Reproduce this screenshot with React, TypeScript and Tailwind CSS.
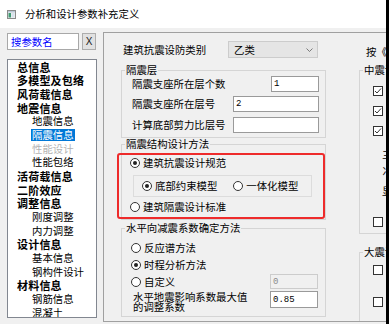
import React from "react";

function Radio({ checked }: { checked?: boolean }) {
  return (
    <span className="w-[10px] h-[10px] rounded-full border border-[#333333] bg-white flex items-center justify-center shrink-0">
      {checked && <span className="w-[4px] h-[4px] rounded-full bg-[#222222]" />}
    </span>
  );
}

function Check({ checked }: { checked?: boolean }) {
  return (
    <span className="w-[10px] h-[10px] border border-[#333333] bg-white flex items-center justify-center shrink-0">
      {checked && (
        <svg width="8" height="8" viewBox="0 0 8 8">
          <polyline points="1,4 3,6 7,1.5" fill="none" stroke="#333333" strokeWidth="1" />
        </svg>
      )}
    </span>
  );
}

function Group({ label, className, children }: { label: string; className?: string; children?: React.ReactNode }) {
  return (
    <fieldset className={"border border-[#d5d5d5] min-w-0 " + (className ?? "")}>
      <legend className="ml-[3px] px-[1px] text-[10.4px] leading-[12px] whitespace-nowrap">{label}</legend>
      {children}
    </fieldset>
  );
}

function Input({ className, value, disabled }: { className: string; value?: string; disabled?: boolean }) {
  return (
    <div
      className={
        "border flex items-center pl-[2px] font-['Liberation_Mono',monospace] text-[9px] leading-[10px] shrink-0 " +
        (disabled ? "border-[#cccccc] bg-[#f0f0f0] text-[#8a8a8a] " : "border-[#9a9a9a] bg-white text-black ") +
        className
      }
    >
      {value}
    </div>
  );
}

type Item = { t: string; b?: boolean; sel?: boolean; dis?: boolean };
const tree: Item[] = [
  { t: "总信息", b: true },
  { t: "多模型及包络", b: true },
  { t: "风荷载信息", b: true },
  { t: "地震信息", b: true },
  { t: "地震信息" },
  { t: "隔震信息", sel: true },
  { t: "性能设计", dis: true },
  { t: "性能包络" },
  { t: "活荷载信息", b: true },
  { t: "二阶效应", b: true },
  { t: "调整信息", b: true },
  { t: "刚度调整" },
  { t: "内力调整" },
  { t: "设计信息", b: true },
  { t: "基本信息" },
  { t: "钢构件设计" },
  { t: "材料信息", b: true },
  { t: "钢筋信息" },
  { t: "混凝土" },
];

function TitleIcon() {
  return (
    <svg width="9" height="9" viewBox="0 0 9 9" className="shrink-0">
      <rect x="0.5" y="0.5" width="8" height="8" fill="#f2f2f2" stroke="#8a8a8a" />
      <rect x="1" y="1" width="7" height="1.5" fill="#b9c7d6" />
      <rect x="1.5" y="3" width="2.5" height="4.5" fill="#3f9a72" />
      <rect x="4.5" y="3" width="3" height="4.5" fill="#d8e2ec" />
    </svg>
  );
}

export default function App() {
  return (
    <div className="w-[389px] h-[324px] overflow-hidden bg-[#f0f0f0] flex font-['Noto_Sans_CJK_SC',sans-serif] text-black">
      <div className="w-[386px] h-full flex flex-col overflow-hidden shrink-0">
        {/* title bar */}
        <div className="h-[28px] bg-white flex items-center pl-[7px] shrink-0">
          <TitleIcon />
          <span className="ml-[9px] text-[10.4px] leading-[12px] whitespace-nowrap">分析和设计参数补充定义</span>
        </div>

        <div className="flex flex-1 pt-[4px] min-h-0">
          {/* left column */}
          <div className="w-[103px] shrink-0 pl-[7px] pt-[1px] flex flex-col">
            <div className="flex h-[17px]">
              <div className="w-[72px] h-[17px] bg-white border border-[#a8a8a8] flex items-center pl-[3px] text-[10.4px] leading-[12px] text-[#0000ff]">
                搜参数名
              </div>
              <div className="ml-[3px] w-[14px] h-[17px] bg-[#e1e1e1] border border-[#adadad] flex items-center justify-center font-['Liberation_Sans',sans-serif] text-[10px] leading-[12px] text-[#222222]">
                X
              </div>
            </div>
            <div className="mt-[9px] w-[90px] h-[259px] bg-white border border-[#828790] flex flex-col overflow-hidden">
              {tree.map((it, i) => (
                <div
                  key={i}
                  className={
                    "h-[13.67px] flex items-center shrink-0 whitespace-nowrap leading-[12px] " +
                    (it.b ? "pl-[8px]" : "pl-[23px]")
                  }
                >
                  <span
                    className={
                      "h-[12px] leading-[12px] flex items-center px-[1px] " +
                      (it.b
                        ? "font-bold text-[11px] tracking-[0.2px] "
                        : "text-[10.4px] ") +
                      (it.sel ? "bg-[#0078d7] text-white " : "") +
                      (it.dis ? "text-[#b4b4b4] " : "")
                    }
                  >
                    {it.t}
                  </span>
                </div>
              ))}
            </div>
          </div>

          {/* right panel */}
          <div className="w-[283px] h-[290px] shrink-0 border-t border-l border-b border-[#a0a0a0] flex overflow-hidden text-[10.4px] leading-[12px]">
            {/* main column */}
            <div className="w-[222px] shrink-0 pl-[17px] flex flex-col">
              <div className="mt-[8px] h-[17px] flex items-center">
                <span className="ml-[2px] w-[105px] whitespace-nowrap">建筑抗震设防类别</span>
                <div className="w-[90px] h-[17px] bg-[#e5e5e5] border border-[#cccccc] flex items-center pl-[5px] pr-[4px] justify-between">
                  <span>乙类</span>
                  <svg width="7" height="4" viewBox="0 0 7 4">
                    <polyline points="0.5,0.5 3.5,3.5 6.5,0.5" fill="none" stroke="#606060" strokeWidth="0.8" />
                  </svg>
                </div>
              </div>

              <Group label="隔震层" className="mt-[6px] pb-[4px]">
                <div className="flex flex-col pl-[10px] pr-[6px]">
                  <div className="h-[16px] flex items-center justify-between">
                    <span className="whitespace-nowrap">隔震支座所在层个数</span>
                    <Input className="w-[48px] h-[16px]" value="1" />
                  </div>
                  <div className="mt-[4px] h-[16px] flex items-center justify-between">
                    <span className="whitespace-nowrap">隔震支座所在层号</span>
                    <Input className="w-[86px] h-[16px]" value="2" />
                  </div>
                  <div className="mt-[5px] h-[16px] flex items-center justify-between">
                    <span className="whitespace-nowrap">计算底部剪力比层号</span>
                    <Input className="w-[86px] h-[16px]" value="" />
                  </div>
                </div>
              </Group>

              <Group label="隔震结构设计方法" className="pb-0">
                <div className="mt-[3px] -ml-[5px] w-[208px] h-[66px] border-2 border-[#ee2b2b] rounded-[3px] flex flex-col">
                  <div className="h-[16px] flex items-center pl-[11px] gap-[3px]">
                    <Radio checked />
                    <span className="whitespace-nowrap">建筑抗震设计规范</span>
                  </div>
                  <div className="mt-[4px] ml-[14px] w-[179px] h-[22px] border border-[#dcdcdc] flex items-center pl-[8px]">
                    <Radio checked />
                    <span className="ml-[3px] whitespace-nowrap">底部约束模型</span>
                    <span className="ml-[16px]"><Radio /></span>
                    <span className="ml-[3px] whitespace-nowrap">一体化模型</span>
                  </div>
                  <div className="mt-[2px] h-[16px] flex items-center pl-[11px] gap-[3px]">
                    <Radio />
                    <span className="whitespace-nowrap">建筑隔震设计标准</span>
                  </div>
                </div>
              </Group>

              <Group label="水平向减震系数确定方法" className="mt-[2px] pb-[4px]">
                <div className="flex flex-col pt-[5px] pr-[7px]">
                  <div className="h-[17px] flex items-center pl-[9px] gap-[3px]">
                    <Radio />
                    <span className="whitespace-nowrap">反应谱方法</span>
                  </div>
                  <div className="h-[17px] flex items-center pl-[9px] gap-[3px]">
                    <Radio checked />
                    <span className="whitespace-nowrap">时程分析方法</span>
                  </div>
                  <div className="h-[17px] flex items-center pl-[9px]">
                    <Radio />
                    <span className="ml-[3px] whitespace-nowrap">自定义</span>
                    <Input className="ml-auto w-[48px] h-[15px]" value="0" disabled />
                  </div>
                  <div className="mt-[1px] h-[21px] flex items-start pl-[11px]">
                    <div className="flex flex-col leading-[10px] mt-[1px] whitespace-nowrap">
                      <span>水平地震影响系数最大值</span>
                      <span>的调整系数</span>
                    </div>
                    <Input className="ml-auto w-[48px] h-[17px]" value="0.85" />
                  </div>
                </div>
              </Group>
            </div>

            {/* right column (clipped) */}
            <div className="ml-[33px] w-[120px] shrink-0 flex flex-col">
              <div className="mt-[13px] h-[14px] flex items-center pl-[7px] whitespace-nowrap">按《建筑隔震设计标准》</div>
              <Group label="中震设计" className="mt-[6px] pb-[3px]">
                <div className="flex flex-col pt-[5px] pl-[13px]">
                  <div className="h-[20px] flex items-center gap-[3px]"><Check checked /><span className="whitespace-nowrap">考虑</span></div>
                  <div className="h-[20px] flex items-center gap-[3px]"><Check checked /><span className="whitespace-nowrap">考虑</span></div>
                  <div className="h-[20px] flex items-center gap-[3px]"><Check checked /><span className="whitespace-nowrap">考虑</span></div>
                  <div className="mt-[6px] h-[16px] flex items-center pl-[9px] whitespace-nowrap">三</div>
                  <div className="h-[16px] flex items-center pl-[9px] whitespace-nowrap">冫</div>
                  <div className="mt-[4px] h-[16px] flex items-center pl-[9px] whitespace-nowrap">显</div>
                  <div className="mt-[14px] h-[17px] flex items-center gap-[3px]"><Check /><span className="whitespace-nowrap">考虑</span></div>
                </div>
              </Group>
              <Group label="大震设计" className="mt-[12px] pb-[10px]">
                <div className="flex flex-col pt-[2px] pl-[13px]">
                  <div className="h-[20px] flex items-center gap-[3px]"><Check /><span className="whitespace-nowrap">考虑</span></div>
                  <div className="mt-[12px] h-[20px] flex items-center gap-[3px]"><Check /><span className="whitespace-nowrap">考虑</span></div>
                </div>
              </Group>
            </div>
          </div>
        </div>
      </div>
      <div className="w-[3px] h-full bg-black shrink-0" />
    </div>
  );
}
